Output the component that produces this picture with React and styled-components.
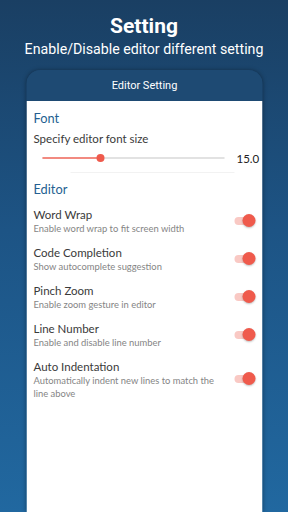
import styled, { createGlobalStyle } from "styled-components";

const Global = createGlobalStyle`
  html, body { margin: 0; padding: 0; }
  body { width: 288px; height: 512px; overflow: hidden; }
`;

const Page = styled.div`
  width: 288px;
  height: 512px;
  background: linear-gradient(180deg, #1a3f63 0%, #1d5485 45%, #2168a0 100%);
  display: flex;
  flex-direction: column;
  align-items: center;
  font-family: Lato, "Noto Sans", sans-serif;
  overflow: hidden;
`;

const Title = styled.h1`
  margin: 13px 0 0;
  font-family: Roboto, sans-serif;
  font-weight: 700;
  font-size: 21px;
  line-height: 26px;
  color: #fff;
`;

const Subtitle = styled.div`
  font-family: Roboto, sans-serif;
  font-size: 14.2px;
  line-height: 18px;
  color: #fff;
  margin-top: 1px;
`;

const Frame = styled.div`
  margin-top: 12px;
  width: 236px;
  flex: 1;
  display: flex;
  flex-direction: column;
  border-radius: 14px 14px 0 0;
  box-shadow: 0 0 4px rgba(0, 0, 0, 0.35);
  overflow: hidden;
  transform: translateX(0.5px);
`;

const FrameBar = styled.div`
  height: 31px;
  background: #1e4a73;
  color: #fff;
  font-family: Roboto, sans-serif;
  font-size: 11px;
  display: flex;
  align-items: center;
  justify-content: center;
`;

const Body = styled.div`
  flex: 1;
  background: #fff;
  padding: 9px 0 0 7px;
`;

const Category = styled.div`
  color: #245f91;
  font-size: 12.8px;
  line-height: 16px;
  margin-bottom: ${(p) => p.$gap || 8}px;
`;

const ItemTitle = styled.div`
  color: #3a3a3a;
  font-size: 11.5px;
  line-height: 15px;
`;

const ItemSummary = styled.div`
  color: #858585;
  font-size: 9.4px;
  line-height: 13px;
`;

const SliderRow = styled.div`
  display: flex;
  align-items: center;
  height: 18px;
  margin-top: 3px;
  padding-left: 9px;
`;

const Track = styled.div`
  position: relative;
  width: 182px;
  height: 2px;
  background: #e2e2e2;
`;

const Fill = styled.div`
  height: 100%;
  background: #f28a80;
`;

const Thumb = styled.span`
  position: absolute;
  top: -3px;
  width: 8px;
  height: 8px;
  margin-left: -4px;
  border-radius: 50%;
  background: #ef5a4c;
`;

const Value = styled.span`
  margin-left: 12px;
  color: #222;
  font-size: 11.5px;
`;

const Divider = styled.div`
  margin: 5px 0 8px 37px;
  width: 164px;
  height: 1px;
  background: #f2f2f2;
`;

const Item = styled.div`
  display: flex;
  align-items: center;
  margin-bottom: 9px;
`;

const Texts = styled.div`
  flex: 1;
  padding: 1px 14px 0 0;
`;

const Switch = styled.div`
  position: relative;
  width: 18px;
  height: 8px;
  margin-right: 10px;
  border-radius: 4px;
  background: #f9c9c4;
`;

const Knob = styled.span`
  position: absolute;
  right: -3px;
  top: -3px;
  width: 13px;
  height: 13px;
  border-radius: 50%;
  background: #ef5a4c;
  box-shadow: 0 1px 2px rgba(0, 0, 0, 0.25);
`;

const items = [
  ["Word Wrap", "Enable word wrap to fit screen width"],
  ["Code Completion", "Show autocomplete suggestion"],
  ["Pinch Zoom", "Enable zoom gesture in editor"],
  ["Line Number", "Enable and disable line number"],
  ["Auto Indentation", "Automatically indent new lines to match the line above"],
];

export default function App() {
  const pct = 32;
  return (
    <Page>
      <Global />
      <Title>Setting</Title>
      <Subtitle>Enable/Disable editor different setting</Subtitle>
      <Frame>
        <FrameBar>Editor Setting</FrameBar>
        <Body>
          <Category $gap={5}>Font</Category>
          <ItemTitle>Specify editor font size</ItemTitle>
          <SliderRow>
            <Track>
              <Fill style={{ width: `${pct}%` }} />
              <Thumb style={{ left: `${pct}%` }} />
            </Track>
            <Value>15.0</Value>
          </SliderRow>
          <Divider />
          <Category $gap={9}>Editor</Category>
          {items.map(([t, s]) => (
            <Item key={t}>
              <Texts>
                <ItemTitle>{t}</ItemTitle>
                <ItemSummary>{s}</ItemSummary>
              </Texts>
              <Switch>
                <Knob />
              </Switch>
            </Item>
          ))}
        </Body>
      </Frame>
    </Page>
  );
}
